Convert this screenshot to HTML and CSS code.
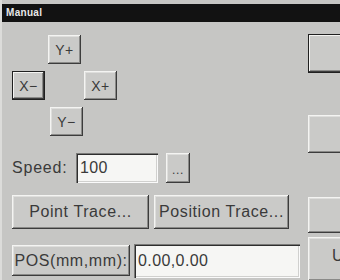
FILE: index.html
```html
<!DOCTYPE html>
<html lang="en">
<head>
    <meta charset="UTF-8">
    <meta name="viewport" content="width=device-width, initial-scale=1.0">
    <title>Manual</title>
    <link rel="stylesheet" href="styles.css">
</head>
<body>
    <div class="window">
        <div class="title-bar">Manual</div>
        <div class="content">
            <div class="left">
                <div class="jog">
                    <button class="btn jog-btn y-plus">Y+</button>
                    <button class="btn jog-btn x-minus default">X&minus;</button>
                    <button class="btn jog-btn x-plus">X+</button>
                    <button class="btn jog-btn y-minus">Y&minus;</button>
                </div>
                <div class="speed-row">
                    <label class="speed-label" for="speed">Speed:</label>
                    <input class="field speed-input" id="speed" type="text" value="100">
                    <button class="btn dots">...</button>
                </div>
                <div class="trace-row">
                    <button class="btn point-trace">Point Trace...</button>
                    <button class="btn pos-trace">Position Trace...</button>
                </div>
                <div class="pos-row">
                    <button class="btn pos-btn">POS(mm,mm):</button>
                    <input class="field pos-input" type="text" value="0.00,0.00">
                </div>
            </div>
            <div class="right">
                <button class="btn side default side-1"></button>
                <button class="btn side side-2"></button>
                <button class="btn side side-3"></button>
                <button class="btn side side-4">U</button>
            </div>
        </div>
    </div>
</body>
</html>
```

FILE: styles.css
```css
body {
    margin: 0;
    background: #c6c6c4;
    font-family: 'Liberation Sans', Arial, sans-serif;
    overflow: hidden;
}

.window {
    width: 340px;
    height: 280px;
    padding-top: 4px;
    border-left: 2px solid #dcdcda;
    box-sizing: border-box;
    background: #c6c6c4;
    overflow: hidden;
}

.title-bar {
    height: 18px;
    background: #121212;
    color: #e8e8e8;
    font-size: 10px;
    font-weight: bold;
    line-height: 18px;
    padding-left: 4px;
    letter-spacing: 0.3px;
}

.content {
    display: flex;
}

.left {
    width: 294px;
    flex-shrink: 0;
    padding-left: 10px;
}

.btn {
    background: #cacac8;
    border: none;
    margin: 0;
    padding: 0;
    color: #3a3a3a;
    font-family: 'Liberation Sans', Arial, sans-serif;
    font-size: 16px;
    letter-spacing: 0.6px;
    box-shadow: inset -1px -1px #3c3c3c, inset 1px 1px #f4f4f2,
                inset -2px -2px #8a8a88, inset 2px 2px #dededc;
}

.btn.default {
    box-shadow: inset 0 0 0 1px #202020, inset -2px -2px #3c3c3c,
                inset 2px 2px #f4f4f2, inset -3px -3px #8a8a88;
}

.field {
    background: #f6f6f4;
    border: none;
    margin: 0;
    color: #3a3a3a;
    font-family: 'Liberation Sans', Arial, sans-serif;
    font-size: 16px;
    letter-spacing: 0.4px;
    padding: 0 0 0 4px;
    box-sizing: border-box;
    box-shadow: inset 1px 1px #7a7a78, inset 2px 2px #2e2e2e,
                inset -1px -1px #fafafa, inset -2px -2px #d0d0ce;
}

.jog {
    display: grid;
    grid-template-columns: 34px 34px 34px;
    grid-template-rows: 29px 29px 29px;
    column-gap: 2px;
    row-gap: 7px;
    margin-top: 13px;
}

.jog-btn {
    font-size: 14px;
    width: 33px;
    height: 29px;
}

.y-plus { grid-column: 2; grid-row: 1; }
.x-minus { grid-column: 1; grid-row: 2; }
.x-plus { grid-column: 3; grid-row: 2; }
.y-minus { grid-column: 2; grid-row: 3; margin-left: 2px; }

.speed-row {
    display: flex;
    align-items: center;
    margin-top: 17px;
    height: 30px;
}

.speed-label {
    width: 64px;
    font-size: 16px;
    letter-spacing: 0.8px;
    color: #3a3a3a;
}

.speed-input {
    width: 82px;
    height: 30px;
}

.dots {
    width: 24px;
    height: 30px;
    margin-left: 8px;
    font-size: 12px;
    line-height: 34px;
}

.trace-row {
    display: flex;
    gap: 5px;
    margin-top: 12px;
}

.point-trace {
    width: 137px;
    height: 34px;
}

.pos-trace {
    width: 135px;
    height: 34px;
}

.pos-row {
    display: flex;
    gap: 4px;
    margin-top: 15px;
}

.pos-btn {
    width: 118px;
    height: 31px;
    margin-top: 1px;
}

.pos-input {
    width: 166px;
    height: 34px;
}

.right {
    display: flex;
    flex-direction: column;
    padding-left: 2px;
    width: 32px;
    overflow: hidden;
}

.side {
    width: 60px;
    flex-shrink: 0;
    text-align: left;
    padding-left: 24px;
}

.side-1 {
    height: 39px;
    margin-top: 12px;
}

.side-2 {
    height: 38px;
    margin-top: 42px;
}

.side-3 {
    height: 36px;
    margin-top: 44px;
}

.side-4 {
    height: 44px;
    margin-top: 4px;
    padding-bottom: 6px;
}
```
